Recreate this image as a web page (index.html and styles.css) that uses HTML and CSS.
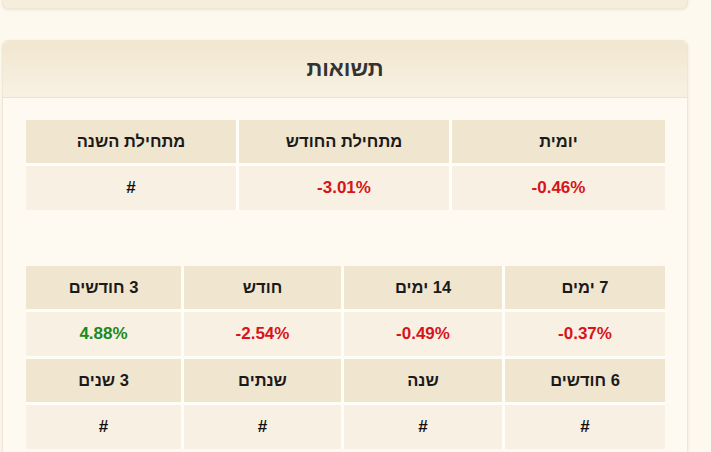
FILE: index.html
```html
<!DOCTYPE html>
<html lang="he" dir="rtl">
<head>
<meta charset="utf-8">
<link rel="stylesheet" href="styles.css">
</head>
<body>
<div class="page">
  <div class="card card-prev"></div>
  <div class="card">
    <div class="card-head"><h2 class="title">תשואות</h2></div>
    <div class="card-body">
      <div class="grid grid-3">
        <div class="cell th">יומית</div>
        <div class="cell th">מתחילת החודש</div>
        <div class="cell th">מתחילת השנה</div>
        <div class="cell td neg"><span dir="ltr">-0.46%</span></div>
        <div class="cell td neg"><span dir="ltr">-3.01%</span></div>
        <div class="cell td">#</div>
      </div>
      <div class="grid grid-4">
        <div class="cell th">7 ימים</div>
        <div class="cell th">14 ימים</div>
        <div class="cell th">חודש</div>
        <div class="cell th">3 חודשים</div>
        <div class="cell td neg"><span dir="ltr">-0.37%</span></div>
        <div class="cell td neg"><span dir="ltr">-0.49%</span></div>
        <div class="cell td neg"><span dir="ltr">-2.54%</span></div>
        <div class="cell td pos"><span dir="ltr">4.88%</span></div>
        <div class="cell th">6 חודשים</div>
        <div class="cell th">שנה</div>
        <div class="cell th">שנתים</div>
        <div class="cell th">3 שנים</div>
        <div class="cell td">#</div>
        <div class="cell td">#</div>
        <div class="cell td">#</div>
        <div class="cell td">#</div>
      </div>
    </div>
  </div>
</div>
</body>
</html>
```
FILE: styles.css
```css
html, body {
  margin: 0;
  padding: 0;
  background: #fdf9ef;
  font-family: "Liberation Sans", Arial, "DejaVu Sans", sans-serif;
  color: #1a1a1a;
  overflow: hidden;
}
.page {
  width: 686px;
  margin-right: 23px;
  margin-left: 2px;
}
.card {
  background: #fefaf1;
  border: 1px solid #efe6d4;
  border-radius: 6px;
  box-shadow: 0 1px 3px rgba(150, 120, 60, 0.15);
}
.card-prev {
  height: 38px;
  margin-top: -31px;
  margin-bottom: 31px;
  background: #f6eedd;
}
.card-head {
  height: 56px;
  display: flex;
  align-items: center;
  justify-content: center;
  background: linear-gradient(to bottom, #f1e6cf, #f8f1e3);
  border-bottom: 1px solid #ece2cf;
  border-radius: 6px 6px 0 0;
}
.title {
  margin: 0;
  font-size: 22px;
  font-weight: bold;
  color: #333;
}
.card-body {
  padding: 22px 22px 24px 23px;
}
.grid {
  display: grid;
  gap: 3px;
  background: #fffdf7;
}
.grid-3 {
  grid-template-columns: 213px 210px 210px;
  margin-bottom: 56px;
}
.grid-4 {
  grid-template-columns: 160px 158px 157px 155px;
}
.cell {
  display: flex;
  align-items: center;
  justify-content: center;
  font-weight: bold;
}
.th {
  height: 43px;
  background: #f0e5cf;
  color: #1a1a1a;
  font-size: 16.5px;
}
.td {
  height: 44px;
  background: #f8f0e2;
  color: #111;
  font-size: 17px;
}
.neg { color: #d7141a; }
.pos { color: #1a8a1a; }
```
